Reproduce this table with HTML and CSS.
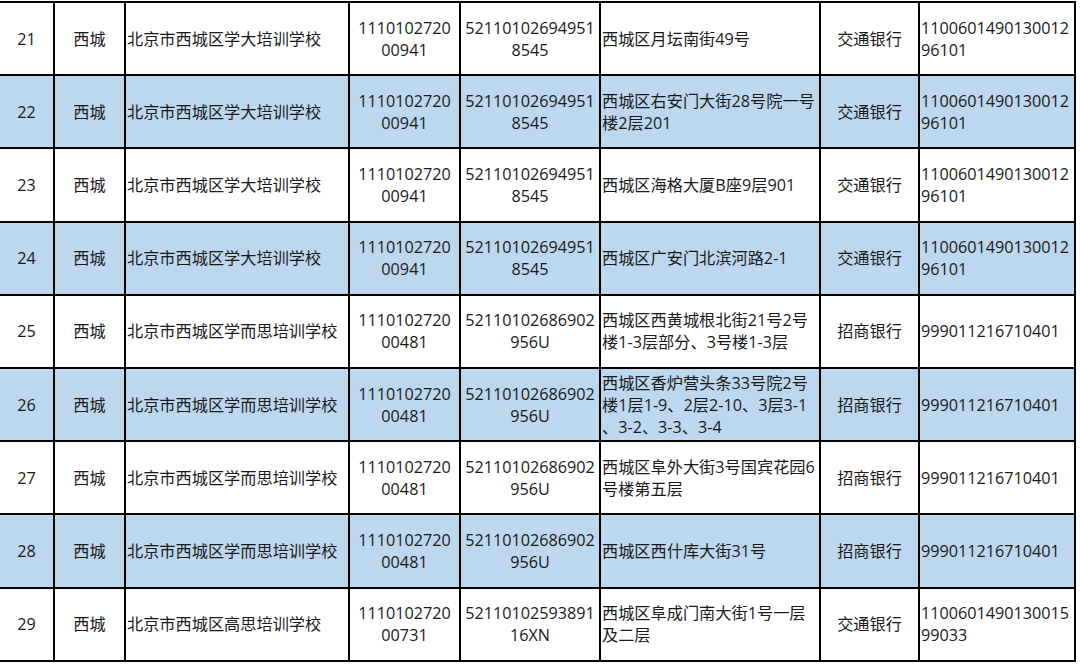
FILE: index.html
```html
<!DOCTYPE html>
<html lang="zh-CN">
<head>
<meta charset="utf-8">
<title>西城区培训学校名单</title>
<link rel="stylesheet" href="styles.css">
</head>
<body>
<table class="grid">
  <colgroup>
    <col class="c-no"><col class="c-area"><col class="c-name"><col class="c-code"><col class="c-credit"><col class="c-addr"><col class="c-bank"><col class="c-acct">
  </colgroup>
  <tbody>
    <tr>
      <td class="ctr">21</td><td class="ctr">西城</td><td class="lft">北京市西城区学大培训学校</td>
      <td class="ctr">1110102720<br>00941</td><td class="ctr">52110102694951<br>8545</td>
      <td class="lft">西城区月坛南街49号</td><td class="ctr">交通银行</td><td class="lft">1100601490130012<br>96101</td>
    </tr>
    <tr class="alt">
      <td class="ctr">22</td><td class="ctr">西城</td><td class="lft">北京市西城区学大培训学校</td>
      <td class="ctr">1110102720<br>00941</td><td class="ctr">52110102694951<br>8545</td>
      <td class="lft">西城区右安门大街28号院一号<br>楼2层201</td><td class="ctr">交通银行</td><td class="lft">1100601490130012<br>96101</td>
    </tr>
    <tr>
      <td class="ctr">23</td><td class="ctr">西城</td><td class="lft">北京市西城区学大培训学校</td>
      <td class="ctr">1110102720<br>00941</td><td class="ctr">52110102694951<br>8545</td>
      <td class="lft">西城区海格大厦B座9层901</td><td class="ctr">交通银行</td><td class="lft">1100601490130012<br>96101</td>
    </tr>
    <tr class="alt">
      <td class="ctr">24</td><td class="ctr">西城</td><td class="lft">北京市西城区学大培训学校</td>
      <td class="ctr">1110102720<br>00941</td><td class="ctr">52110102694951<br>8545</td>
      <td class="lft">西城区广安门北滨河路2-1</td><td class="ctr">交通银行</td><td class="lft">1100601490130012<br>96101</td>
    </tr>
    <tr>
      <td class="ctr">25</td><td class="ctr">西城</td><td class="lft">北京市西城区学而思培训学校</td>
      <td class="ctr">1110102720<br>00481</td><td class="ctr">52110102686902<br>956U</td>
      <td class="lft">西城区西黄城根北街21号2号<br>楼1-3层部分、3号楼1-3层</td><td class="ctr">招商银行</td><td class="lft">999011216710401</td>
    </tr>
    <tr class="alt">
      <td class="ctr">26</td><td class="ctr">西城</td><td class="lft">北京市西城区学而思培训学校</td>
      <td class="ctr">1110102720<br>00481</td><td class="ctr">52110102686902<br>956U</td>
      <td class="lft">西城区香炉营头条33号院2号<br>楼1层1-9、2层2-10、3层3-1<br>、3-2、3-3、3-4</td><td class="ctr">招商银行</td><td class="lft">999011216710401</td>
    </tr>
    <tr>
      <td class="ctr">27</td><td class="ctr">西城</td><td class="lft">北京市西城区学而思培训学校</td>
      <td class="ctr">1110102720<br>00481</td><td class="ctr">52110102686902<br>956U</td>
      <td class="lft">西城区阜外大街3号国宾花园6<br>号楼第五层</td><td class="ctr">招商银行</td><td class="lft">999011216710401</td>
    </tr>
    <tr class="alt">
      <td class="ctr">28</td><td class="ctr">西城</td><td class="lft">北京市西城区学而思培训学校</td>
      <td class="ctr">1110102720<br>00481</td><td class="ctr">52110102686902<br>956U</td>
      <td class="lft">西城区西什库大街31号</td><td class="ctr">招商银行</td><td class="lft">999011216710401</td>
    </tr>
    <tr>
      <td class="ctr">29</td><td class="ctr">西城</td><td class="lft">北京市西城区高思培训学校</td>
      <td class="ctr">1110102720<br>00731</td><td class="ctr">52110102593891<br>16XN</td>
      <td class="lft">西城区阜成门南大街1号一层<br>及二层</td><td class="ctr">交通银行</td><td class="lft">1100601490130015<br>99033</td>
    </tr>
  </tbody>
</table>
</body>
</html>
```

FILE: styles.css
```css
html, body {
  margin: 0;
  padding: 0;
  background: #ffffff;
}

body {
  overflow: hidden;
}

.grid {
  border-collapse: separate;
  border-spacing: 0;
  table-layout: fixed;
  width: 1076px;
  margin: 1px 0 0 0;
  border-top: 2px solid #000000;
  font-family: "Open Sans", "Noto Sans CJK SC", sans-serif;
  font-size: 16.2px;
  line-height: 22px;
  color: #1a1a1a;
}

.c-no { width: 55px; }
.c-area { width: 71px; }
.c-name { width: 224px; }
.c-code { width: 111px; }
.c-credit { width: 140px; }
.c-addr { width: 220px; }
.c-bank { width: 99px; }
.c-acct { width: 156px; }

.grid td {
  border-right: 2px solid #000000;
  border-bottom: 2px solid #000000;
  height: 73.2px;
  box-sizing: border-box;
  padding: 0 1px 0 1px;
  vertical-align: middle;
  white-space: nowrap;
  overflow: hidden;
}

.grid .ctr { text-align: center; }
.grid .lft { text-align: left; }

.alt td {
  background: #bdd7ee;
}
```
